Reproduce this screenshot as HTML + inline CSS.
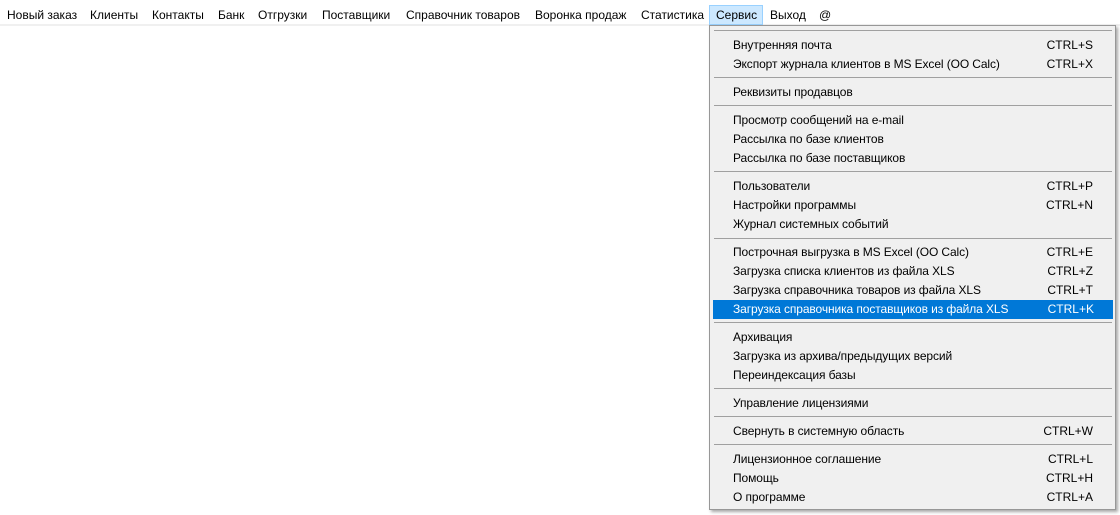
<!DOCTYPE html><html><head><meta charset="utf-8"><style>
body{margin:0;width:1120px;height:515px;background:#fff;position:relative;overflow:hidden;font-family:"Liberation Sans",sans-serif;font-size:12px;color:#000}
.m{position:absolute;top:8px;white-space:nowrap}
.bar{position:absolute;left:0;top:24px;width:1120px;height:2px;background:#f0f0f0}
.sv{position:absolute;left:709px;top:5px;width:52px;height:18px;background:#cce8ff;border:1px solid #99d1ff}
.menu{position:absolute;left:709px;top:25px;width:405px;height:483px;background:#f0f0f0;border:1px solid #979797;box-shadow:2px 2px 3px rgba(0,0,0,.35)}
.i{position:absolute;left:0;width:405px;height:19px;line-height:19px;margin-top:1px;white-space:nowrap}
.i span{position:absolute;left:23px;letter-spacing:-0.1px}
.i b{position:absolute;right:22px;font-weight:normal}
.s{position:absolute;left:4px;width:398px;height:1px;background:#a0a0a0}
.h{background:#0078d7;color:#fff;left:3px;width:400px}
.h span{left:20px}.h b{right:19px}
</style></head><body>
<div class="bar"></div>
<div class="sv"></div>
<div class="m" style="left:7px">Новый заказ</div>
<div class="m" style="left:90px">Клиенты</div>
<div class="m" style="left:152px">Контакты</div>
<div class="m" style="left:218px">Банк</div>
<div class="m" style="left:258px">Отгрузки</div>
<div class="m" style="left:322px">Поставщики</div>
<div class="m" style="left:406px">Справочник товаров</div>
<div class="m" style="left:535px">Воронка продаж</div>
<div class="m" style="left:641px">Статистика</div>
<div class="m" style="left:716px">Сервис</div>
<div class="m" style="left:770px">Выход</div>
<div class="m" style="left:819px">@</div>
<div class="menu">
<div class="s" style="top:4px"></div>
<div class="i" style="top:9px"><span>Внутренняя почта</span><b>CTRL+S</b></div>
<div class="i" style="top:28px"><span>Экспорт журнала клиентов в MS Excel (OO Calc)</span><b>CTRL+X</b></div>
<div class="s" style="top:51px"></div>
<div class="i" style="top:56px"><span>Реквизиты продавцов</span></div>
<div class="s" style="top:79px"></div>
<div class="i" style="top:84px"><span>Просмотр сообщений на e-mail</span></div>
<div class="i" style="top:103px"><span>Рассылка по базе клиентов</span></div>
<div class="i" style="top:122px"><span>Рассылка по базе поставщиков</span></div>
<div class="s" style="top:145px"></div>
<div class="i" style="top:150px"><span>Пользователи</span><b>CTRL+P</b></div>
<div class="i" style="top:169px"><span>Настройки программы</span><b>CTRL+N</b></div>
<div class="i" style="top:188px"><span>Журнал системных событий</span></div>
<div class="s" style="top:212px"></div>
<div class="i" style="top:216px"><span>Построчная выгрузка в MS Excel (OO Calc)</span><b>CTRL+E</b></div>
<div class="i" style="top:235px"><span>Загрузка списка клиентов из файла XLS</span><b>CTRL+Z</b></div>
<div class="i" style="top:254px"><span>Загрузка справочника товаров из файла XLS</span><b>CTRL+T</b></div>
<div class="i h" style="top:273px"><span>Загрузка справочника поставщиков из файла XLS</span><b>CTRL+K</b></div>
<div class="s" style="top:296px"></div>
<div class="i" style="top:301px"><span>Архивация</span></div>
<div class="i" style="top:320px"><span>Загрузка из архива/предыдущих версий</span></div>
<div class="i" style="top:339px"><span>Переиндексация базы</span></div>
<div class="s" style="top:362px"></div>
<div class="i" style="top:367px"><span>Управление лицензиями</span></div>
<div class="s" style="top:390px"></div>
<div class="i" style="top:395px"><span>Свернуть в системную область</span><b>CTRL+W</b></div>
<div class="s" style="top:418px"></div>
<div class="i" style="top:423px"><span>Лицензионное соглашение</span><b>CTRL+L</b></div>
<div class="i" style="top:442px"><span>Помощь</span><b>CTRL+H</b></div>
<div class="i" style="top:461px"><span>О программе</span><b>CTRL+A</b></div>
</div>
</body></html>
